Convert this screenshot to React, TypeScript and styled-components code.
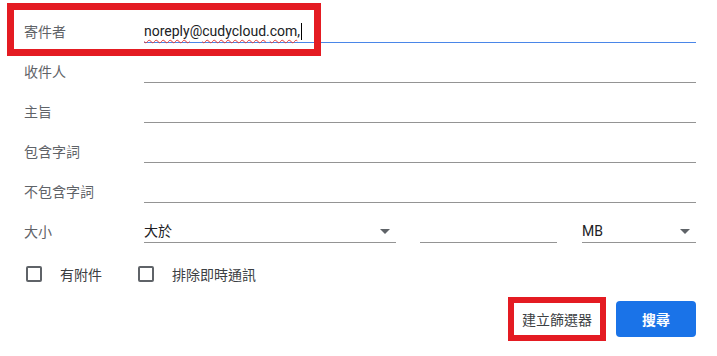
import styled, { createGlobalStyle } from "styled-components";

const GlobalStyle = createGlobalStyle`
    html, body {
        margin: 0;
        padding: 0;
        background: #ffffff;
    }
    body {
        font-family: Roboto, "Noto Sans CJK TC", sans-serif;
    }
`;

const fields = ["寄件者", "收件人", "主旨", "包含字詞", "不包含字詞"];

const Caret = () => <CaretLine />;

const ArrowDown = () => (
    <svg width="10" height="5" viewBox="0 0 10 5">
        <path d="M0 0 L10 0 L5 5 Z" fill="#5f6368" />
    </svg>
);

export default function App() {
    return (
        <Page>
            <GlobalStyle />
            {fields.map((label, i) => (
                <Row key={label}>
                    <Label>{label}</Label>
                    <Field $focused={i === 0}>
                        {i === 0 && (
                            <Value>
                                <Squiggle>noreply</Squiggle>@<Squiggle>cudycloud</Squiggle>.<Squiggle>com</Squiggle>,
                                <Caret />
                            </Value>
                        )}
                    </Field>
                    {i === 0 && <Annotation />}
                </Row>
            ))}
            <Row>
                <Label>大小</Label>
                <SizeGroup>
                    <Select $width={252}>
                        <Value>大於</Value>
                        <ArrowDown />
                    </Select>
                    <Field $width={137} />
                    <Select $width={114}>
                        <Value>MB</Value>
                        <ArrowDown />
                    </Select>
                </SizeGroup>
            </Row>
            <CheckRow>
                <CheckItem>
                    <Box />
                    <span>有附件</span>
                </CheckItem>
                <CheckItem>
                    <Box />
                    <span>排除即時通訊</span>
                </CheckItem>
            </CheckRow>
            <Actions>
                <TextButton>
                    建立篩選器
                    <ButtonAnnotation />
                </TextButton>
                <PrimaryButton>搜尋</PrimaryButton>
            </Actions>
        </Page>
    );
}

const Page = styled.div`
    width: 717px;
    height: 356px;
    box-sizing: border-box;
    padding: 3px 21px 0 24px;
    display: flex;
    flex-direction: column;
`;

const Row = styled.div`
    position: relative;
    display: grid;
    grid-template-columns: 120px 1fr;
    align-items: end;
    height: 40px;
`;

const Label = styled.div`
    font-size: 14px;
    line-height: 20px;
    color: #5f6368;
    padding-bottom: 1px;
`;

const Field = styled.div<{ $focused?: boolean; $width?: number }>`
    height: 39px;
    width: ${(p) => (p.$width ? `${p.$width}px` : "auto")};
    box-sizing: border-box;
    border-bottom: 1px solid ${(p) => (p.$focused ? "#4a86e8" : "#949494")};
    display: flex;
    align-items: flex-end;
    padding-bottom: 1px;
`;

const Value = styled.span`
    font-size: 14px;
    line-height: 20px;
    color: #202124;
    display: inline-flex;
    align-items: center;
`;

const Squiggle = styled.span`
    text-decoration: underline wavy #e53935;
    text-decoration-thickness: 1px;
    text-underline-offset: 3px;
`;

const CaretLine = styled.span`
    display: inline-block;
    width: 1px;
    height: 17px;
    margin-left: 1px;
    background: #000000;
`;

const Annotation = styled.div`
    position: absolute;
    left: -17px;
    top: 0;
    width: 314px;
    height: 53px;
    box-sizing: border-box;
    border: 7px solid #e41b22;
    pointer-events: none;
`;

const SizeGroup = styled.div`
    display: flex;
    gap: 24px;
    align-items: end;
    > div:last-child {
        margin-left: 1px;
    }
`;

const Select = styled.div<{ $width: number }>`
    width: ${(p) => p.$width}px;
    height: 39px;
    box-sizing: border-box;
    border-bottom: 1px solid #949494;
    display: flex;
    align-items: flex-end;
    justify-content: space-between;
    padding-bottom: 1px;
    > svg {
        margin: 0 6px 7px 0;
    }
`;

const CheckRow = styled.div`
    display: flex;
    align-items: center;
    gap: 36px;
    margin-top: 21px;
    padding-left: 2px;
`;

const CheckItem = styled.label`
    display: flex;
    align-items: center;
    gap: 18px;
    font-size: 14px;
    color: #3c4043;
`;

const Box = styled.span`
    width: 16px;
    height: 16px;
    box-sizing: border-box;
    border: 2px solid #5f6368;
    border-radius: 2px;
`;

const Actions = styled.div`
    display: flex;
    justify-content: flex-end;
    gap: 16px;
    margin-top: 17px;
`;

const TextButton = styled.button`
    position: relative;
    width: 86px;
    height: 36px;
    border: none;
    background: #ffffff;
    font-family: Roboto, "Noto Sans CJK TC", sans-serif;
    font-size: 14px;
    font-weight: 400;
    color: #3c4043;
    padding: 0;
`;

const ButtonAnnotation = styled.span`
    position: absolute;
    top: -4px;
    bottom: -4px;
    left: -6px;
    right: -6px;
    border: 6px solid #e41b22;
    pointer-events: none;
`;

const PrimaryButton = styled.button`
    width: 80px;
    height: 36px;
    border: none;
    border-radius: 4px;
    background: #1a73e8;
    color: #ffffff;
    font-family: Roboto, "Noto Sans CJK TC", sans-serif;
    font-size: 14px;
    font-weight: 700;
    padding: 0;
`;
